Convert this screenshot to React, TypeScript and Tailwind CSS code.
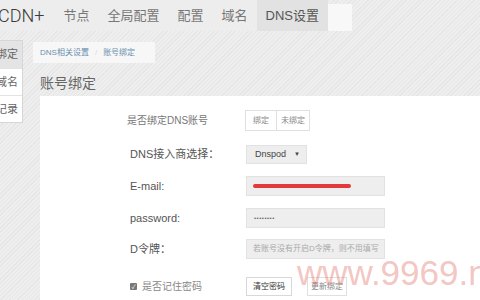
import { useState } from "react";

const navItems = ["节点", "全局配置", "配置", "域名"];
const sideItems = ["绑定", "域名", "记录"];

export default function App() {
  const [bound, setBound] = useState(true);

  return (
    <div className="relative w-[480px] h-[300px] overflow-hidden bg-[repeating-linear-gradient(135deg,#eeeeee_0px,#eeeeee_2px,#e6e6e6_2px,#e6e6e6_3px)] font-['Liberation_Sans','Noto_Sans_CJK_SC',sans-serif]">
      {/* top navigation */}
      <div className="flex h-[31px] items-stretch">
        <div className="flex items-center bg-[#ededed] pr-[10px]">
          <span className="-ml-[2px] font-['Roboto',sans-serif] text-[18px] font-light leading-none text-[#3a3a3a]">CDN+</span>
        </div>
        {navItems.map((item) => (
          <div key={item} className="flex items-center bg-[#ededed] px-[9px] text-[13px] text-[#777]">
            {item}
          </div>
        ))}
        <div className="flex items-center bg-[#e2e2e2] px-[9px] text-[13px] text-[#555]">DNS设置</div>
        <div className="mt-[4px] w-[24px] bg-[#f8f8f8]" />
      </div>

      <div className="mt-[9px] flex">
        {/* side menu */}
        <div className="flex w-[23px] shrink-0 flex-col self-start border border-l-0 border-[#d6d6d6] bg-white">
          {sideItems.map((item, i) => (
            <div
              key={item}
              className={
                "flex h-[27px] items-center justify-end overflow-hidden whitespace-nowrap pr-[4px] text-[11px] text-[#666] " +
                (i === 0 ? "bg-[#e4e4e4]" : "border-t border-[#e2e2e2]")
              }
            >
              {item}
            </div>
          ))}
        </div>

        <div className="ml-[10px] flex-1">
          {/* breadcrumb */}
          <div className="mt-[2px] flex h-[21px] w-[122px] items-center gap-[6px] bg-[#f7f7f7] pl-[7px] text-[8px] text-[#6a8fae]">
            <span>DNS相关设置</span>
            <span className="text-[#d8d8d8]">/</span>
            <span>账号绑定</span>
          </div>

          <div className="ml-[7px] mt-[12px] text-[14px] leading-[16px] text-[#666]">账号绑定</div>

          {/* form panel */}
          <div className="ml-[7px] mt-[5px] h-[300px] bg-white pt-[14px] text-[11px] text-[#555]">
            <div className="flex h-[21px] items-center">
              <div className="w-[206px] pl-[87px] text-[10px] text-[#777]">是否绑定DNS账号</div>
              <div className="-ml-[1px] flex h-full border border-[#e0e0e0] text-[8px] text-[#888]">
                <button
                  onClick={() => setBound(true)}
                  className={"w-[31px] border-r border-[#e0e0e0] " + (bound ? "bg-white" : "bg-[#f3f3f3]")}
                >
                  绑定
                </button>
                <button
                  onClick={() => setBound(false)}
                  className={"w-[32px] " + (!bound ? "bg-[#f3f3f3]" : "bg-white")}
                >
                  未绑定
                </button>
              </div>
            </div>

            <div className="mt-[14px] flex h-[19px] items-center">
              <div className="w-[206px] pl-[90px]">DNS接入商选择：</div>
              <div className="flex h-full w-[61px] items-center justify-between border border-[#e2e2e2] bg-[#eeeeee] pl-[8px] pr-[6px] text-[9px] text-[#444]">
                <span>Dnspod</span>
                <span className="text-[6px]">▼</span>
              </div>
            </div>

            <div className="mt-[12px] flex h-[20px] items-center">
              <div className="w-[206px] pl-[90px]">E-mail:</div>
              <div className="flex h-full w-[139px] items-center border border-[#e2e2e2] bg-[#eeeeee] pl-[6px]">
                <span className="h-[4px] w-[98px] rounded-full bg-[#e23a3a]" />
              </div>
            </div>

            <div className="mt-[12px] flex h-[20px] items-center">
              <div className="w-[206px] pl-[90px]">password:</div>
              <div className="flex h-full w-[139px] items-center border border-[#e2e2e2] bg-[#eeeeee] pl-[7px] text-[6px] tracking-[0.5px] text-[#666]">
                ••••••••
              </div>
            </div>

            <div className="mt-[11px] flex h-[20px] items-center">
              <div className="w-[206px] pl-[90px]">D令牌：</div>
              <div className="flex h-full w-[139px] items-center overflow-hidden whitespace-nowrap border border-[#e2e2e2] bg-[#eeeeee] pl-[6px] text-[8px] text-[#aaa]">
                若账号没有开启D令牌，则不用填写
              </div>
            </div>

            <div className="mt-[18px] flex h-[19px] items-center">
              <div className="flex w-[206px] items-center gap-[5px] pl-[90px] text-[10px] text-[#888]">
                <span className="flex h-[7px] w-[7px] items-center justify-center rounded-[1px] bg-[#777] text-[6px] leading-none text-white">
                  ✓
                </span>
                是否记住密码
              </div>
              <button className="h-full w-[46px] border border-[#d8d8d8] bg-white text-[8px] text-[#333]">清空密码</button>
              <button className="ml-[15px] h-full w-[40px] border border-[#e0e0e0] bg-white text-[8px] text-[#888]">更新绑定</button>
            </div>
          </div>
        </div>
      </div>

      {/* watermark */}
      <div className="pointer-events-none absolute left-[297px] top-[255px] whitespace-nowrap font-['Liberation_Sans',sans-serif] text-[35px] leading-none text-[#e06a60]/40">
        www.9969.net
      </div>
    </div>
  );
}
